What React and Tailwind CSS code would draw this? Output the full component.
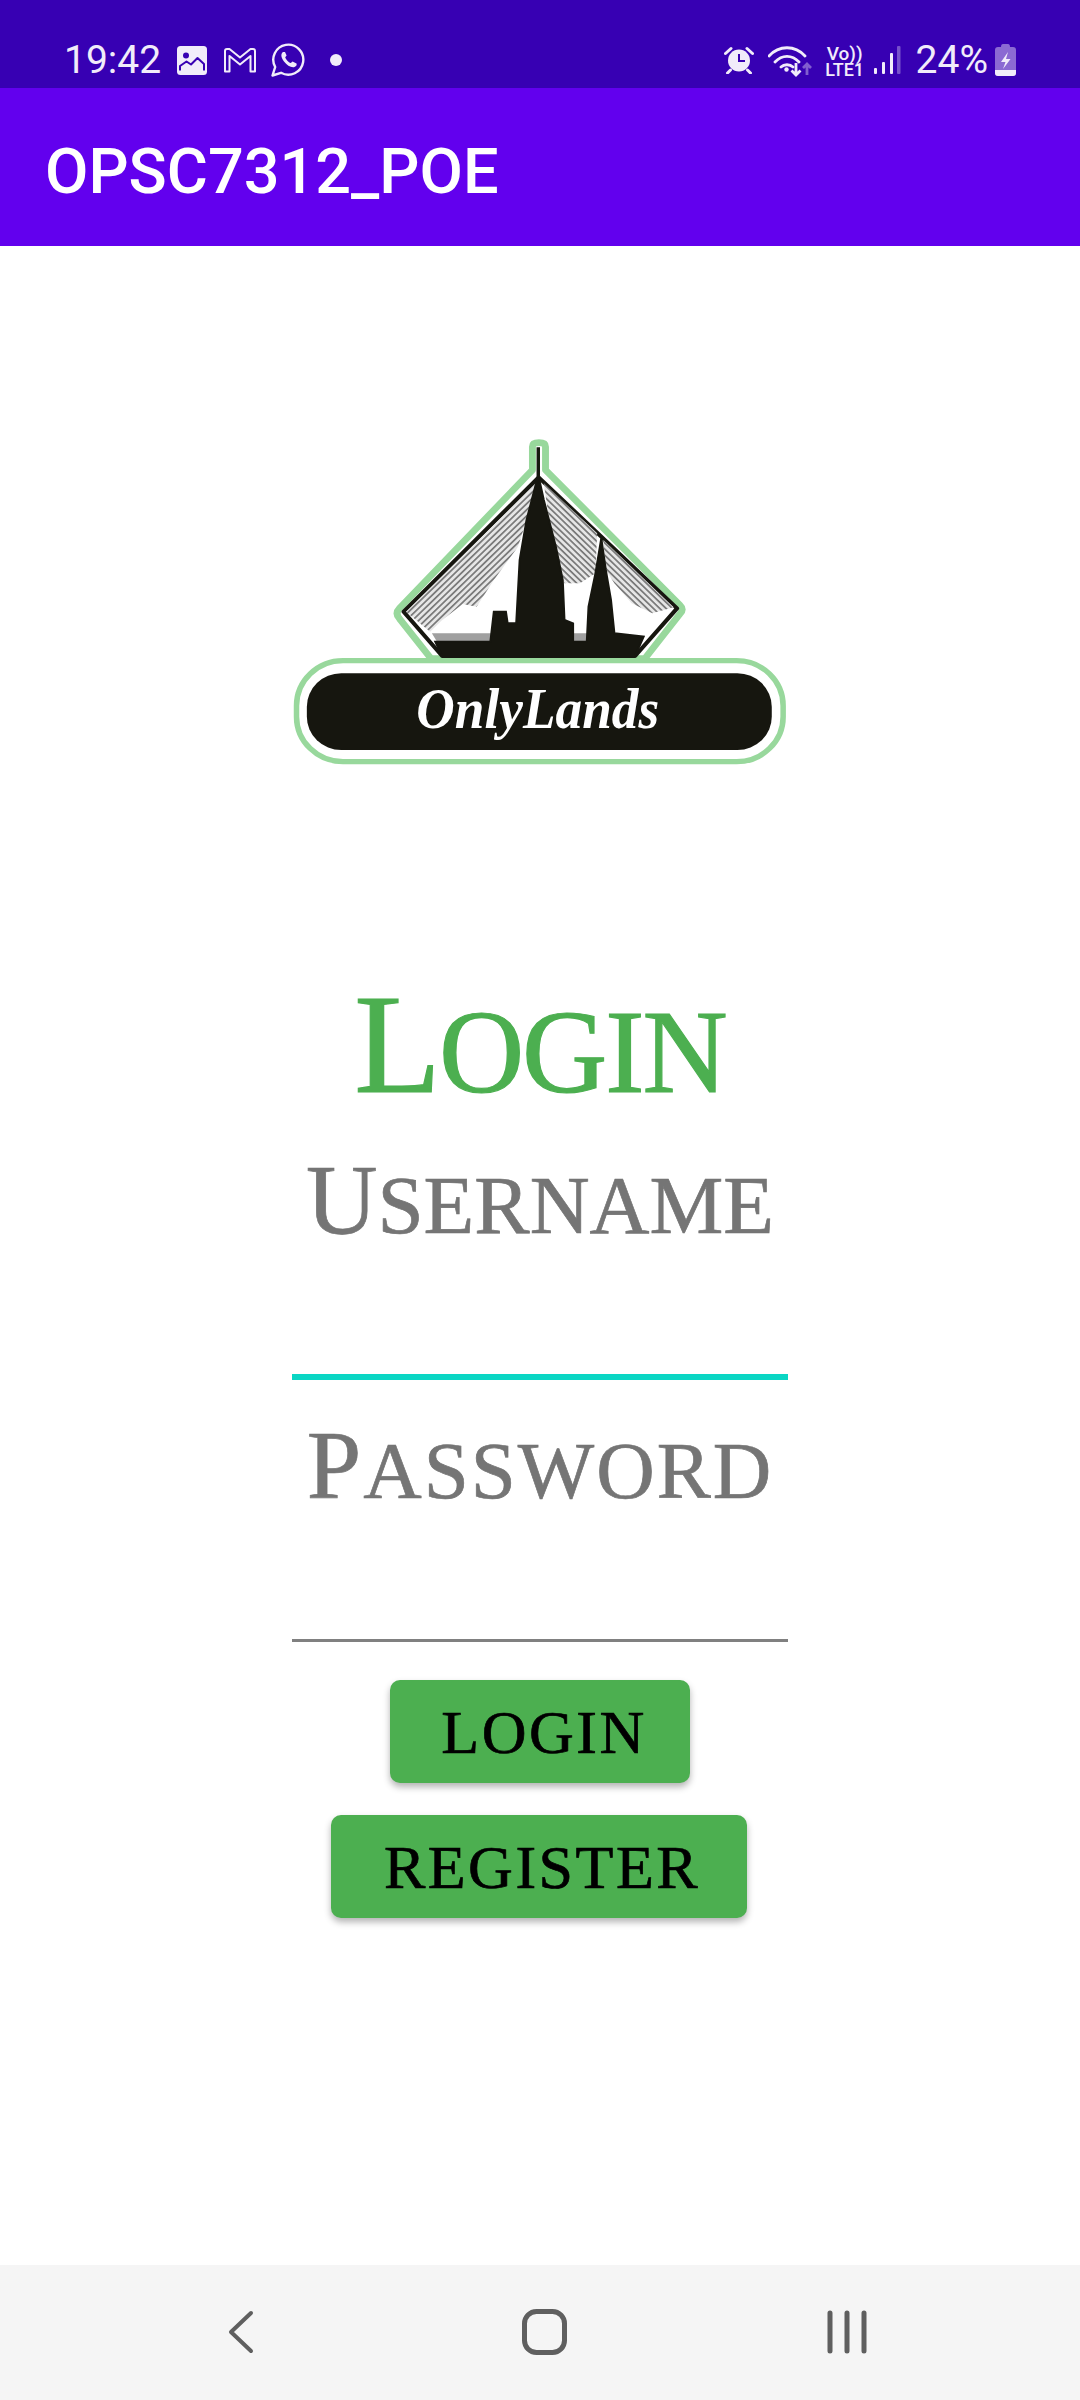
const PALE = "#F1ECFA";

const ImageIcon = () => (
  <svg width="30" height="29" viewBox="0 0 30 29">
    <rect x="0" y="0" width="30" height="29" rx="3.5" fill={PALE} />
    <circle cx="9" cy="9.5" r="3" fill="#3700B3" />
    <path d="M3 24.5 V20 L9.5 15.5 L14 18.5 L20.5 12 L27 18 V24.5" fill="none" stroke="#3700B3" strokeWidth="2" strokeLinejoin="round" />
  </svg>
);

const GmailIcon = () => (
  <svg width="34" height="25" viewBox="0 0 34 25">
    <path d="M2 23.5 V3 Q2 1 4 1 H6.5 L17 9.5 L27.5 1 H30 Q32 1 32 3 V23.5 H27.5 V8 L17 16.5 L6.5 8 V23.5 Z" fill="none" stroke={PALE} strokeWidth="2" strokeLinejoin="round" />
  </svg>
);

const WhatsappIcon = () => (
  <svg width="34" height="34" viewBox="0 0 34 34">
    <path d="M1.5 32.5 L4.2 24 A15 15 0 1 1 10 29.8 Z" fill="none" stroke={PALE} strokeWidth="2.4" strokeLinejoin="round" />
    <path d="M12 9 C9.5 11 10 14.5 13 18.5 C16 22.5 20.5 25 23.5 24 C25.5 23.4 26 21.5 25.5 20.5 L21.5 18.5 L19.8 20 C17.5 19.3 14.8 16.2 14.2 14.2 L15.6 12.6 L14 9 Z" fill={PALE} />
  </svg>
);

const AlarmIcon = () => (
  <svg width="30" height="28" viewBox="0 0 30 28">
    <circle cx="15" cy="14.5" r="11" fill={PALE} />
    <path d="M15 8 V15 H21" fill="none" stroke="#3700B3" strokeWidth="2" />
    <path d="M1.5 7.5 L7 2.5 M23 2.5 L28.5 7.5 M6.5 24 L3.5 27 M23.5 24 L26.5 27" stroke={PALE} strokeWidth="3" strokeLinecap="round" />
  </svg>
);

const WifiIcon = () => (
  <svg width="44" height="33" viewBox="0 0 44 33">
    <path d="M1 12 C11 1 27 1 37 12 M7 18 C14 10.5 24 10.5 31 18 M13 23 C16 20 22 20 25 23" fill="none" stroke={PALE} strokeWidth="2.8" strokeLinecap="round" />
    <circle cx="18.5" cy="25.5" r="2.2" fill={PALE} />
    <path d="M28 19 V31 M23.5 26.5 L28 31 L32.5 26.5" fill="none" stroke={PALE} strokeWidth="2.8" />
    <path d="M39 31 V20 M35 24 L39 20 L43 24" fill="none" stroke={PALE} strokeWidth="2.8" opacity="0.4" />
  </svg>
);

const SignalIcon = () => (
  <svg width="28" height="28" viewBox="0 0 28 28">
    <rect x="1" y="22" width="3" height="6" rx="1" fill={PALE} />
    <rect x="9" y="16" width="3" height="12" rx="1" fill={PALE} />
    <rect x="17" y="7" width="3" height="21" rx="1" fill={PALE} />
    <rect x="24" y="0" width="3.5" height="28" rx="1" fill={PALE} opacity="0.35" />
  </svg>
);

const BatteryIcon = () => (
  <svg width="21" height="32" viewBox="0 0 21 32">
    <path d="M6 3 Q6 0 8 0 H13 Q15 0 15 3 H18 Q21 3 21 6 V29 Q21 32 18 32 H3 Q0 32 0 29 V6 Q0 3 3 3 Z" fill={PALE} opacity="0.45" />
    <path d="M0 26 H21 V29 Q21 32 18 32 H3 Q0 32 0 29 Z" fill={PALE} />
    <path d="M13 8 L6 18 H10.5 L8 25 L15.5 15 H11 Z" fill={PALE} />
  </svg>
);

const Logo = () => (
  <svg width="540" height="360" viewBox="0 0 1568 1080" preserveAspectRatio="none">
    <defs>
      <pattern id="hatchLeft" width="13" height="13" patternUnits="userSpaceOnUse" patternTransform="rotate(-45)">
        <rect width="13" height="13" fill="#e6e6e6" />
        <rect width="13" height="5" fill="#777777" />
      </pattern>
      <pattern id="hatchRight" width="13" height="13" patternUnits="userSpaceOnUse" patternTransform="rotate(45)">
        <rect width="13" height="13" fill="#e6e6e6" />
        <rect width="13" height="5" fill="#777777" />
      </pattern>
    </defs>
    <path
      d="M762 150 V80 Q762 68 781 68 Q800 68 800 80 V150 L1190 555 Q1203 568 1190 582 L1088 716 H468 L376 596 Q362 580 376 565 Z"
      fill="#ffffff"
      stroke="#98D89C"
      strokeWidth="20"
      strokeLinejoin="round"
    />
    <path d="M780 172 L388 575 L500 708 H1060 L1182 565 Z" fill="#ffffff" stroke="#16160f" strokeWidth="12" strokeLinejoin="round" />
    <path d="M772 190 L395 575 L465 635 L500 600 L560 552 L600 560 L650 480 L720 380 L745 300 Z" fill="url(#hatchLeft)" />
    <path d="M795 190 L950 340 L945 460 L900 490 L855 490 L815 330 Z" fill="url(#hatchRight)" />
    <path d="M968 360 L1172 562 L1110 580 L1050 550 L1000 490 L975 450 Z" fill="url(#hatchRight)" />
    <path d="M470 640 H650 V665 H485 Z M880 640 H925 V665 H880 Z" fill="#a0a0a0" />
    <path
      d="M781 85 V175 L795 240 L830 380 L850 480 L855 600 L880 610 L880 665 L920 665 L925 560 L945 460 L962 355 L975 450 L990 540 L1000 640 L1085 650 L1060 708 H500 L480 665 L640 665 L650 575 L685 575 L690 610 L715 610 L725 420 L745 300 L770 200 L777 175 V85 Z"
      fill="#16160f"
      stroke="#16160f"
      strokeWidth="6"
    />
    <rect x="77" y="722" width="1413" height="303" rx="135" fill="#ffffff" stroke="#98D89C" strokeWidth="16" />
    <rect x="107" y="760" width="1350" height="230" rx="100" fill="#16160f" />
    <text
      x="425"
      y="925"
      textLength="705"
      lengthAdjust="spacingAndGlyphs"
      fontFamily="'Liberation Serif', serif"
      fontStyle="italic"
      fontWeight="700"
      fontSize="170"
      fill="#ffffff"
    >
      OnlyLands
    </text>
  </svg>
);

const StatusBar = () => (
  <div className="h-[88px] bg-[#3700B3] flex items-center justify-between pt-[32px] pl-[64px] pr-[64px] text-[#F1ECFA] text-[39px] font-['Roboto',sans-serif]">
    <div className="flex items-center">
      <span className="leading-none w-[113px]">19:42</span>
      <ImageIcon />
      <span className="ml-[16px]"><GmailIcon /></span>
      <span className="ml-[14px]"><WhatsappIcon /></span>
      <span className="ml-[25px] w-[12px] h-[12px] rounded-full bg-[#F1ECFA]" />
    </div>
    <div className="flex items-center">
      <AlarmIcon />
      <span className="ml-[14px]"><WifiIcon /></span>
      <div className="ml-[13px] w-[40px] flex flex-col items-center font-medium">
        <span className="text-[19px] leading-[19px]">Vo))</span>
        <span className="text-[18px] leading-[14px]">LTE1</span>
      </div>
      <span className="ml-[8px]"><SignalIcon /></span>
      <span className="ml-[15px] leading-none">24%</span>
      <span className="ml-[7px]"><BatteryIcon /></span>
    </div>
  </div>
);

const NavBar = () => (
  <div className="h-[135px] bg-[#F5F5F5] flex items-center pl-[226px] pb-[2px]">
    <svg width="29" height="46" viewBox="0 0 29 46">
      <path d="M25 4 L5 23 L25 42" fill="none" stroke="#5F5F5F" strokeWidth="4" strokeLinecap="round" strokeLinejoin="round" />
    </svg>
    <svg className="ml-[267px]" width="45" height="46" viewBox="0 0 45 46">
      <rect x="2.5" y="2.5" width="40" height="41" rx="12" fill="none" stroke="#5F5F5F" strokeWidth="5" />
    </svg>
    <svg className="ml-[255px]" width="50" height="46" viewBox="0 0 50 46">
      <path d="M8 4 V42 M25 4 V42 M42 4 V42" stroke="#5F5F5F" strokeWidth="5" strokeLinecap="round" />
    </svg>
  </div>
);

export default function App() {
  return (
    <div className="w-[1080px] h-[2400px] flex flex-col bg-white overflow-hidden">
      <StatusBar />
      <div className="h-[158px] bg-[#6200EE] flex items-center pl-[45px] pt-[8px]">
        <h1 className="text-white text-[63px] font-medium font-['Roboto',sans-serif] leading-none">OPSC7312_POE</h1>
      </div>
      <div className="flex-1 flex flex-col items-center pt-[174px] font-['Liberation_Serif',serif]">
        <Logo />
        <h2 className="mt-[189px] text-[142px] leading-[150px] text-[#4CAF50] tracking-[-2px] [-webkit-text-stroke:1.2px_#4CAF50]">
          L<span className="text-[118px] leading-none uppercase">ogin</span>
        </h2>
        <label className="mt-[30px] text-[99px] leading-[102px] text-[#757575] [-webkit-text-stroke:0.7px_#757575]">
          U<span className="text-[83px] leading-none uppercase">sername</span>
        </label>
        <input className="w-[496px] h-[129px] border-b-[6px] border-[#0AD6C4] outline-none" />
        <label className="mt-[35px] text-[98px] leading-[101px] text-[#757575] tracking-[2px] [-webkit-text-stroke:0.7px_#757575]">
          P<span className="text-[81px] leading-none uppercase">assword</span>
        </label>
        <input type="password" className="w-[496px] h-[126px] border-b-[3px] border-[#808080] outline-none" />
        <button className="mt-[38px] w-[300px] h-[103px] pl-[8px] rounded-[10px] bg-[#4CAF50] shadow-[0_4px_7px_rgba(0,0,0,0.3)] text-black text-[62px] leading-none tracking-[2.5px] [-webkit-text-stroke:0.7px_#000]">
          LOGIN
        </button>
        <button className="mt-[32px] w-[416px] h-[103px] pl-[6px] -translate-x-px rounded-[10px] bg-[#4CAF50] shadow-[0_4px_7px_rgba(0,0,0,0.3)] text-black text-[62px] leading-none tracking-[2.5px] [-webkit-text-stroke:0.7px_#000]">
          REGISTER
        </button>
      </div>
      <NavBar />
    </div>
  );
}
